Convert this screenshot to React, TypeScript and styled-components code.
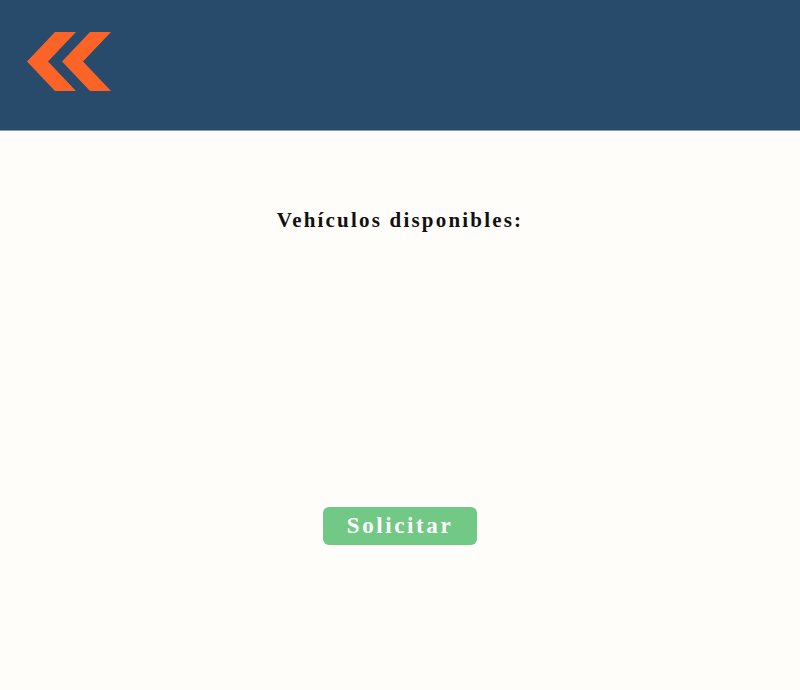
import styled, {createGlobalStyle} from "styled-components";

const GlobalStyle = createGlobalStyle`
  html, body {
    margin: 0;
    padding: 0;
    background-color: #fffdf9;
  }
`;

const Page = styled.div`
  width: 800px;
  height: 690px;
  display: flex;
  flex-direction: column;
  background-color: #fffdf9;
  font-family: "Liberation Serif", "DejaVu Serif", serif;
`;

const Header = styled.header`
  height: 130px;
  box-sizing: border-box;
  flex-shrink: 0;
  display: flex;
  align-items: flex-start;
  padding: 32px 0 0 27px;
  background-color: #284b6c;
  box-shadow: 0 1px 0 #8a9cac;
`;

const Content = styled.main`
  flex: 1;
  display: flex;
  flex-direction: column;
  align-items: center;
  padding-top: 78px;
`;

const Title = styled.h2`
  margin: 0;
  font-size: 21px;
  font-weight: bold;
  letter-spacing: 2.2px;
  color: #111;
`;

const VehicleList = styled.ul`
  list-style: none;
  margin: 0;
  padding: 0;
  height: 274px;
`;

const RequestButton = styled.button`
  width: 154px;
  height: 38px;
  border: none;
  border-radius: 6px;
  background-color: #72c985;
  color: #fff;
  font-family: inherit;
  font-size: 23px;
  font-weight: bold;
  letter-spacing: 2.6px;
  cursor: pointer;
`;

const Logo = () => (
    <svg width="85" height="60" viewBox="27 32 85 60">
        <polygon points="55,32 76,32 48,61.5 76,91 55,91 27,61.5" fill="#fb6426"/>
        <polygon points="90,32 111,32 83,61.5 111,91 90,91 62,61.5" fill="#fb6426"/>
    </svg>
);

export default function App() {
    return (
        <>
            <GlobalStyle/>
            <Page>
                <Header>
                    <Logo/>
                </Header>
                <Content>
                    <Title>Vehículos disponibles:</Title>
                    <VehicleList/>
                    <RequestButton>Solicitar</RequestButton>
                </Content>
            </Page>
        </>
    );
}
